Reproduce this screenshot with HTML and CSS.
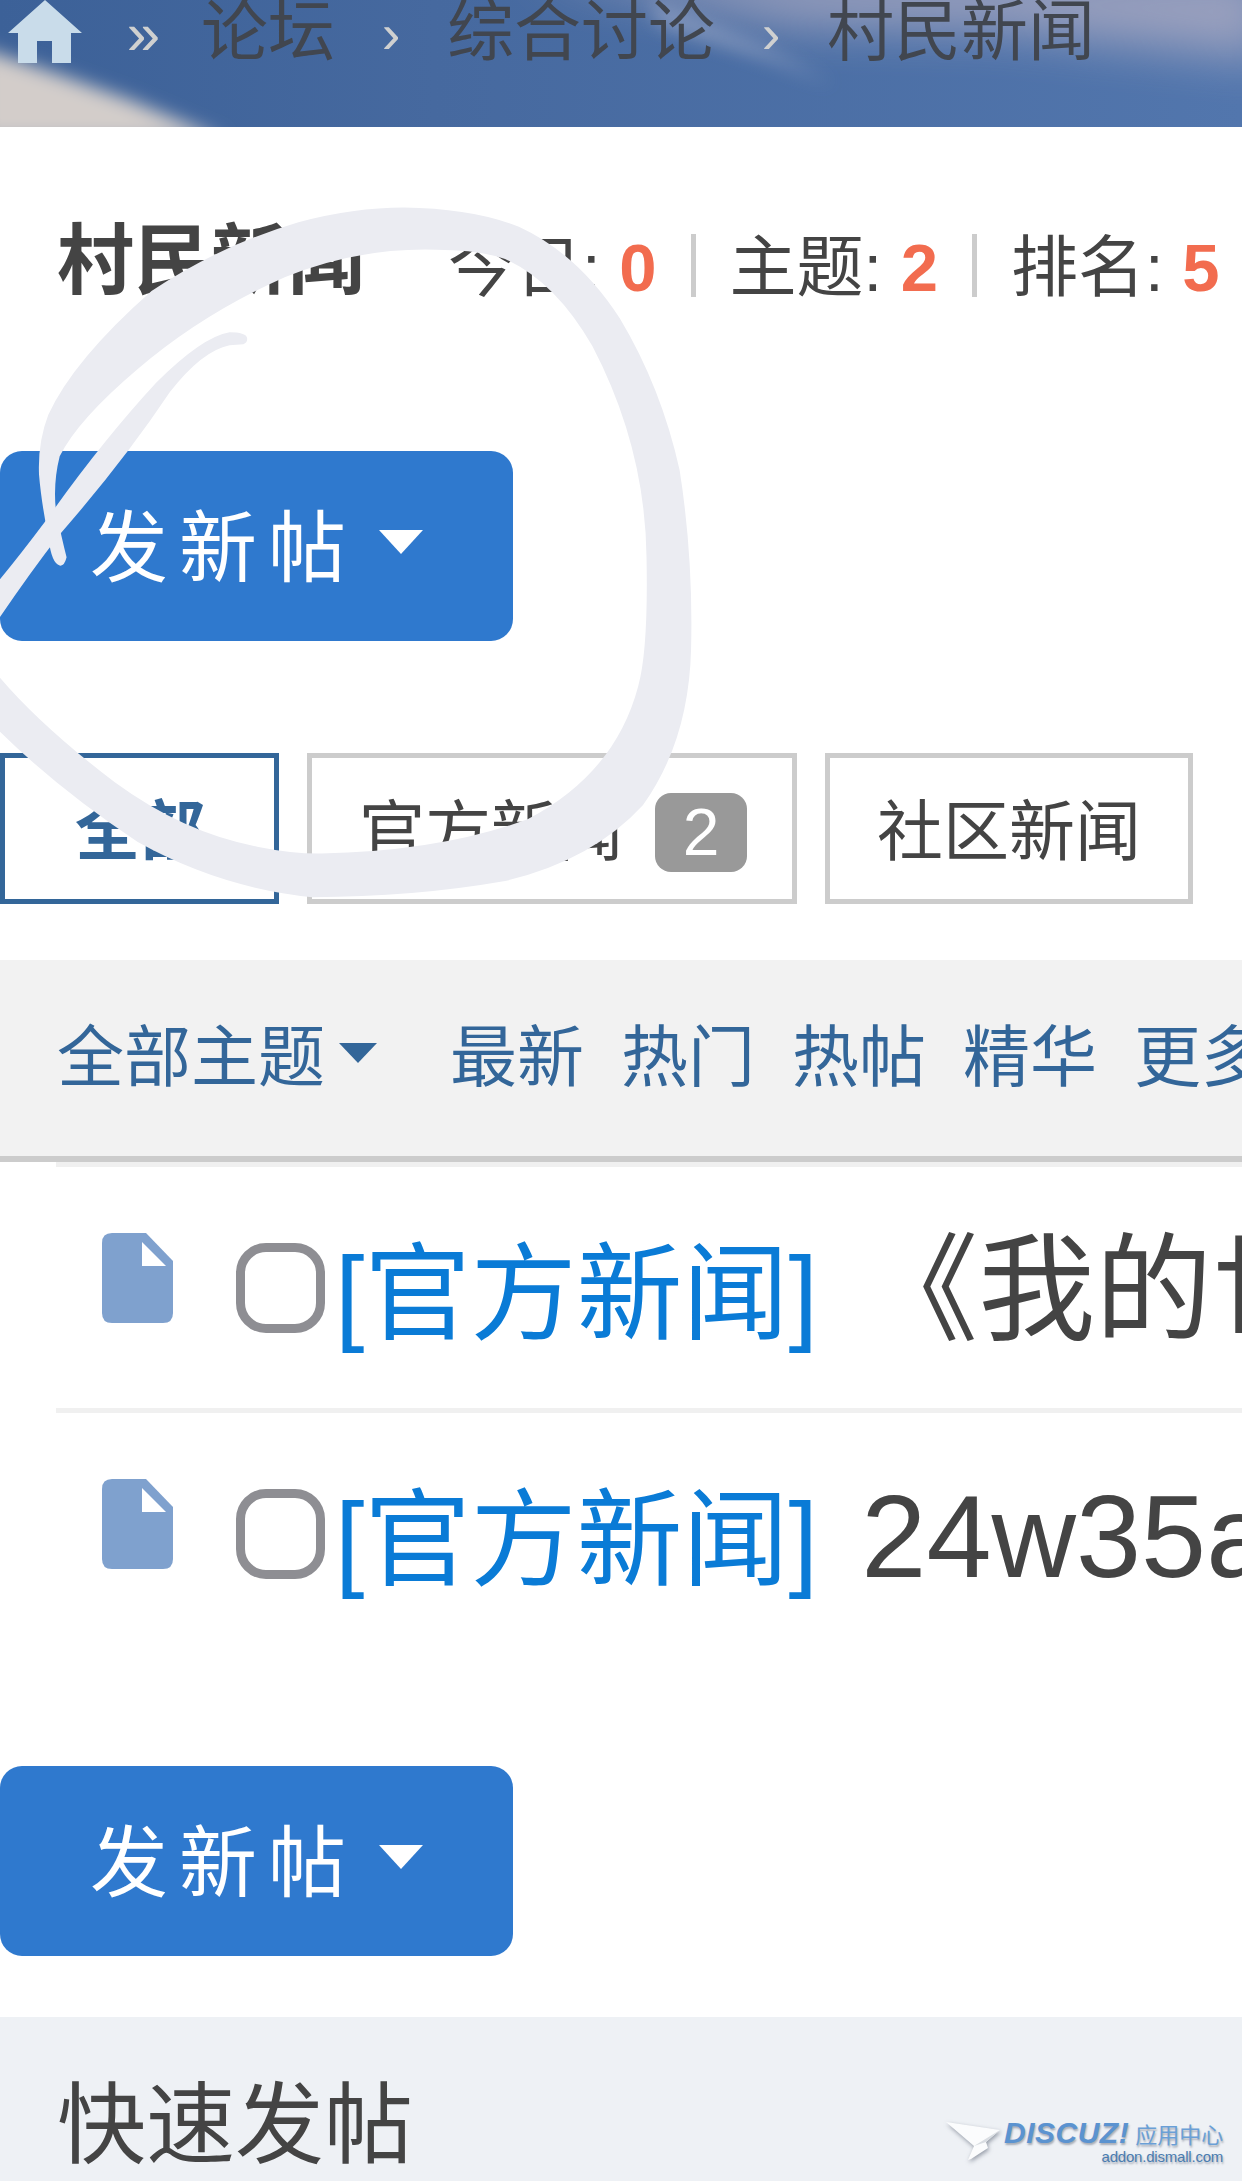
FILE: index.html
```html
<!DOCTYPE html>
<html>
<head>
  <meta charset="utf-8">
  <link rel="stylesheet" href="styles.css">
</head>
<body>
  <div class="crumbs">
    <svg class="crumbs-bg" viewBox="0 0 1242 127" preserveAspectRatio="none">
      <defs>
        <filter id="soft" x="-50%" y="-100%" width="200%" height="300%"><feGaussianBlur stdDeviation="9"/></filter>
        <filter id="softer" x="-50%" y="-200%" width="200%" height="500%"><feGaussianBlur stdDeviation="24"/></filter>
      </defs>
      <path d="M-20 48 L60 75 L130 100 L225 140 L-20 140 Z" fill="#d3cdca" filter="url(#soft)"/>
      <path d="M520 -30 L1270 -30 L1270 60 L1000 30 L800 25 Z" fill="#b2afc4" opacity=".75" filter="url(#softer)"/>
      <path d="M650 0 L760 45 L835 85 L770 60 L660 25 Z" fill="#a3aecb" opacity=".6" filter="url(#soft)"/>
    </svg>
    <svg class="home" viewBox="0 0 74 63"><path d="M37 0 L74 33 L63 33 L63 63 L44 63 L44 41 L29 41 L29 63 L10 63 L10 33 L0 33 Z" fill="#c9dcea"/></svg>
    <span class="sep first">»</span>
    <a>论坛</a>
    <span class="sep">›</span>
    <a>综合讨论</a>
    <span class="sep">›</span>
    <a>村民新闻</a>
  </div>

  <div class="forum-info">
    <h1>村民新闻</h1>
    <div class="stats">
      <span>今日: <b>0</b></span><i></i>
      <span>主题: <b>2</b></span><i></i>
      <span>排名: <b>5</b></span>
    </div>
  </div>

  <button class="post-btn">发新帖<span class="caret"></span></button>

  <div class="tabs">
    <a class="tab current">全部</a>
    <a class="tab counted">官方新闻<span class="badge">2</span></a>
    <a class="tab">社区新闻</a>
  </div>

  <div class="filter-bar">
    <a>全部主题<span class="caret-small"></span></a>
    <a class="push">最新</a>
    <a>热门</a>
    <a>热帖</a>
    <a>精华</a>
    <a>更多</a>
  </div>

  <div class="threads">
    <div class="thread">
      <svg class="file-icon" viewBox="0 0 71 90"><path d="M10 0 H44 L71 28 V80 Q71 90 61 90 H10 Q0 90 0 80 V10 Q0 0 10 0 Z" fill="#7fa1ce"/><path d="M40 9 L64 33 H40 Z" fill="#fff"/></svg>
      <span class="check"></span>
      <div class="subject"><a>[官方新闻]</a> <span class="title">《我的世界》</span></div>
    </div>
    <div class="thread">
      <svg class="file-icon" viewBox="0 0 71 90"><path d="M10 0 H44 L71 28 V80 Q71 90 61 90 H10 Q0 90 0 80 V10 Q0 0 10 0 Z" fill="#7fa1ce"/><path d="M40 9 L64 33 H40 Z" fill="#fff"/></svg>
      <span class="check"></span>
      <div class="subject"><a>[官方新闻]</a> <span class="title">24w35a</span></div>
    </div>
  </div>

  <button class="post-btn bottom">发新帖<span class="caret"></span></button>

  <div class="quick-post">快速发帖</div>

  <!-- pen mark drawn over the page -->
  <svg class="scribble" viewBox="0 0 1568 1568">
    <path d="M130 818 Q112 812 106 760 Q90 680 85 620 Q82 550 105 490 Q160 370 330 220 Q480 120 650 70 Q770 38 880 38 Q1030 40 1130 80 Q1260 140 1350 280 Q1440 430 1480 610 Q1510 800 1505 1000 Q1500 1200 1400 1340 Q1290 1460 1100 1505 Q900 1540 680 1540 Q480 1520 300 1420 Q120 1300 -10 1170 L-10 1050 Q80 1160 250 1290 Q400 1400 560 1430 Q640 1446 700 1445 Q960 1440 1150 1370 Q1340 1270 1390 1080 Q1412 1000 1408 800 Q1405 560 1290 340 Q1210 200 1100 150 Q1040 130 950 130 Q780 125 620 190 Q440 270 300 390 Q170 500 130 580 Q115 640 122 700 Q135 760 145 800 Q140 820 130 818 Z"/>
    <path d="M538 322 Q535 310 500 310 Q440 320 340 420 Q220 550 100 720 Q40 800 -10 860 L-10 945 Q60 840 130 750 Q270 590 370 440 Q440 350 500 338 L530 336 Q540 332 538 322 Z"/>
  </svg>

  <div class="watermark">
    <svg class="plane" viewBox="0 0 54 38"><path d="M0 0 L54 8 L40 20 L42 26 L25 37 L22 38 L28 24 Z" fill="#fbfcfd"/><path d="M28 24 L54 8 L40 20 Z" fill="#d9dde2"/></svg>
    <div class="mark-text">
      <div class="mark-top"><b>DISCUZ!</b><span>应用中心</span></div>
      <div class="mark-url">addon.dismall.com</div>
    </div>
  </div>
</body>
</html>
```

FILE: styles.css
```css
html, body {
  margin: 0;
  padding: 0;
}

body {
  position: relative;
  width: 1242px;
  height: 2181px;
  overflow: hidden;
  background: #fff;
  color: #444;
  font-family: "Liberation Sans", "Noto Sans CJK SC", sans-serif;
}

a {
  color: inherit;
  text-decoration: none;
}

/* breadcrumb */
.crumbs {
  position: relative;
  display: flex;
  align-items: flex-start;
  height: 127px;
  padding-left: 8px;
  box-sizing: border-box;
  overflow: hidden;
  background: linear-gradient(90deg, #3c6198 0%, #46699f 35%, #5276ad 100%);
  font-size: 67px;
  line-height: 64px;
  color: #41464f;
}

.crumbs-bg {
  position: absolute;
  left: 0;
  top: 0;
  width: 100%;
  height: 100%;
}

.crumbs > a,
.crumbs > .sep,
.crumbs > .home {
  position: relative;
  flex: none;
}

.home {
  width: 74px;
  height: 63px;
}

.sep {
  color: #cfd0d0;
  text-align: center;
  width: 112px;
  font-size: 56px;
  line-height: 68px;
}

.sep.first {
  box-sizing: border-box;
  width: 119px;
  padding-left: 4px;
  font-size: 60px;
}

/* forum name and counters */
.forum-info {
  display: flex;
  align-items: center;
  height: 112px;
  margin: 78px 0 134px;
  padding-left: 57px;
}

.forum-info h1 {
  flex: none;
  margin: 0 83px 0 0;
  font-size: 77px;
  line-height: 112px;
  font-weight: 700;
  white-space: nowrap;
}

.stats {
  display: flex;
  align-items: center;
  font-size: 67px;
}

.stats span {
  white-space: nowrap;
}

.stats b {
  color: #f26c4f;
}

.stats i {
  width: 5px;
  height: 63px;
  margin: 8px 34px 0;
  background: #ccc;
}

/* post button */
.post-btn {
  display: flex;
  align-items: center;
  width: 513px;
  height: 190px;
  padding: 0 0 8px 90px;
  border: 0;
  border-radius: 22px;
  background: #2f79ce;
  color: #fff;
  font-family: inherit;
  font-size: 78px;
  letter-spacing: 11px;
}

.post-btn.bottom {
  margin-top: 112px;
}

.caret {
  margin: 0 0 0 22px;
  border-style: solid;
  border-width: 24px 22px 0;
  border-color: #fff transparent transparent;
}

/* category tabs */
.tabs {
  display: flex;
  gap: 28px;
  margin-top: 112px;
}

.tab {
  display: flex;
  align-items: center;
  height: 151px;
  box-sizing: border-box;
  padding: 0 47px 6px;
  border: 5px solid #ccc;
  font-size: 66px;
}

.tab.counted {
  padding-right: 45px;
}

.tab.current {
  width: 279px;
  padding: 0 0 6px 70px;
  border-color: #336699;
  color: #336699;
  font-size: 65px;
  font-weight: 700;
}

.badge {
  width: 92px;
  height: 79px;
  margin: 14px 0 0 32px;
  border-radius: 16px;
  background: #999;
  color: #fff;
  text-align: center;
  line-height: 79px;
}

/* filter bar */
.filter-bar {
  display: flex;
  align-items: center;
  gap: 37px;
  height: 202px;
  box-sizing: border-box;
  margin-top: 56px;
  padding: 0 0 14px 57px;
  border-bottom: 6px solid #ccc;
  background: #f2f2f2;
  color: #336699;
  font-size: 67px;
  white-space: nowrap;
}

.filter-bar a {
  display: flex;
  align-items: center;
  flex: none;
}

.filter-bar .push {
  margin-left: 36px;
}

.caret-small {
  margin: 4px 0 0 14px;
  border-style: solid;
  border-width: 20px 19px 0;
  border-color: #336699 transparent transparent;
}

/* thread list */
.threads {
  margin: 0 0 0 56px;
  border-top: 5px solid #f0f0f0;
}

.thread {
  display: flex;
  align-items: flex-start;
  height: 241px;
  overflow: hidden;
}

.thread + .thread {
  border-top: 5px solid #f0f0f0;
}

.file-icon {
  flex: none;
  width: 71px;
  height: 90px;
  margin: 66px 0 0 46px;
}

.check {
  flex: none;
  width: 89px;
  height: 90px;
  box-sizing: border-box;
  margin: 76px 0 0 63px;
  border: 9px solid #8e8e93;
  border-radius: 30px;
}

.subject {
  flex: none;
  margin: 64px 0 0 10px;
  font-size: 106px;
  line-height: 120px;
  white-space: nowrap;
  color: #444;
}

.subject a {
  color: #0a7bd6;
}

.subject .title {
  margin-left: 14px;
  font-size: 117px;
}

/* quick reply header */
.quick-post {
  height: 164px;
  margin-top: 61px;
  padding: 58px 0 0 57px;
  box-sizing: border-box;
  background: #eef1f5;
  font-size: 89px;
  line-height: 100px;
}

/* the hand drawn circle */
.scribble {
  position: absolute;
  left: 0;
  top: 190px;
  width: 720px;
  height: 720px;
  fill: #ebecf2;
}

/* image host stamp */
.watermark {
  position: absolute;
  left: 946px;
  top: 2120px;
  display: flex;
  align-items: flex-start;
}

.plane {
  width: 54px;
  height: 38px;
  margin-top: 2px;
  filter: drop-shadow(1px 2px 2px rgba(60, 70, 90, .5));
}

.mark-text {
  margin-left: 4px;
  text-shadow: 1px 2px 2px rgba(60, 70, 90, .4);
}

.mark-top {
  display: flex;
  align-items: center;
  height: 26px;
  white-space: nowrap;
}

.mark-top b {
  font-size: 30px;
  font-style: italic;
  color: #5b93d0;
  letter-spacing: .5px;
}

.mark-top span {
  margin-left: 6px;
  font-size: 22px;
  color: #6a9fd6;
}

.mark-url {
  margin-top: 2px;
  text-align: right;
  font-size: 15px;
  letter-spacing: -.2px;
  color: #4a7cb0;
}
```
